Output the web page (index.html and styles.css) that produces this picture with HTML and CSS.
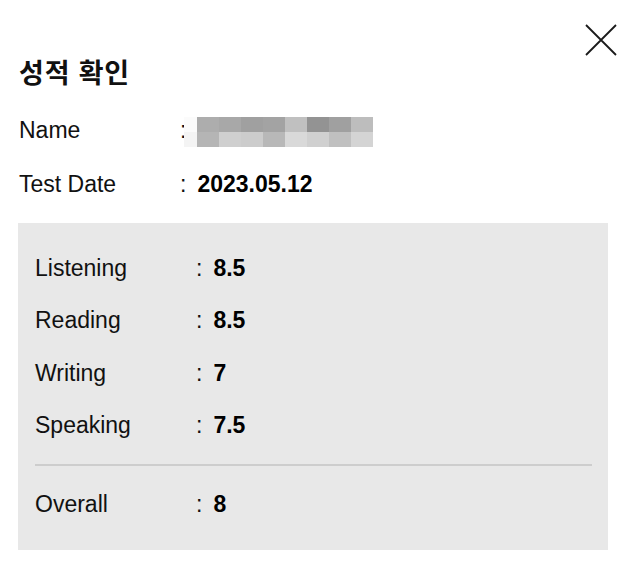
FILE: index.html
```html
<!DOCTYPE html>
<html lang="ko">
<head>
<meta charset="utf-8">
<title>성적 확인</title>
<link rel="stylesheet" href="styles.css">
</head>
<body>
<div class="sheet">
  <div class="topbar">
    <button class="close" aria-label="닫기">
      <svg width="32" height="32" viewBox="0 0 32 32"><path d="M1 1 L31 31 M31 1 L1 31" stroke="#1a1a1a" stroke-width="1.8" fill="none"/></svg>
    </button>
  </div>
  <h1 class="title">성적 확인</h1>
  <div class="info">
    <div class="row">
      <span class="label">Name</span>
      <span class="colon">:</span>
      <span class="blur" aria-label="hidden name">
        <i></i><i></i><i></i><i></i><i></i><i></i><i></i><i></i><i></i>
        <i></i><i></i><i></i><i></i><i></i><i></i><i></i><i></i><i></i>
      </span>
    </div>
    <div class="row">
      <span class="label">Test Date</span>
      <span class="colon">:</span>
      <span class="value">2023.05.12</span>
    </div>
  </div>
  <div class="scores">
    <div class="row srow">
      <span class="label">Listening</span>
      <span class="colon">:</span>
      <span class="value">8.5</span>
    </div>
    <div class="row srow">
      <span class="label">Reading</span>
      <span class="colon">:</span>
      <span class="value">8.5</span>
    </div>
    <div class="row srow">
      <span class="label">Writing</span>
      <span class="colon">:</span>
      <span class="value">7</span>
    </div>
    <div class="row srow">
      <span class="label">Speaking</span>
      <span class="colon">:</span>
      <span class="value">7.5</span>
    </div>
    <div class="divider"></div>
    <div class="row srow">
      <span class="label">Overall</span>
      <span class="colon">:</span>
      <span class="value">8</span>
    </div>
  </div>
</div>
</body>
</html>
```

FILE: styles.css
```css
* { box-sizing: border-box; }
html, body { margin: 0; padding: 0; background: #fff; }
body {
  font-family: "Liberation Sans", Arial, sans-serif;
  color: #111;
  width: 629px;
  height: 568px;
  overflow: hidden;
}
.sheet {
  padding: 24px 0 0 0;
}
.topbar {
  display: flex;
  justify-content: flex-end;
  height: 32px;
  padding-right: 12px;
}
.close {
  border: 0;
  background: none;
  padding: 0;
  margin: 0;
  width: 32px;
  height: 32px;
  display: block;
  cursor: pointer;
}
.close svg { display: block; }
.title {
  margin: 1px 0 0 19px;
  font-family: "Noto Sans CJK KR", sans-serif;
  font-weight: 700;
  font-size: 27px;
  line-height: 30px;
  color: #111;
  letter-spacing: 0.8px;
}
.info {
  margin: 16px 0 0 19px;
}
.row {
  display: grid;
  grid-template-columns: 150px auto 1fr;
  column-gap: 11px;
  align-items: center;
  height: 54px;
  font-size: 23px;
}
.label { color: #111; }
.colon { color: #111; }
.value { font-weight: 700; color: #000; }
.blur {
  display: grid;
  grid-template-columns: 13px repeat(8, 22px);
  grid-template-rows: 15px 15px;
  width: 189px;
  margin-left: -13px;
  margin-top: 4px;
}
.blur i { display: block; }
.blur i:nth-child(1) { background: #fbfbfb; }
.blur i:nth-child(2) { background: #adadad; }
.blur i:nth-child(3) { background: #a8a8a8; }
.blur i:nth-child(4) { background: #a0a0a0; }
.blur i:nth-child(5) { background: #a3a3a3; }
.blur i:nth-child(6) { background: #c0c0c0; }
.blur i:nth-child(7) { background: #939393; }
.blur i:nth-child(8) { background: #a0a0a0; }
.blur i:nth-child(9) { background: #bdbdbd; }
.blur i:nth-child(10) { background: #f4f4f4; }
.blur i:nth-child(11) { background: #b5b5b5; }
.blur i:nth-child(12) { background: #cfcfcf; }
.blur i:nth-child(13) { background: #cccccc; }
.blur i:nth-child(14) { background: #b8b8b8; }
.blur i:nth-child(15) { background: #d9d9d9; }
.blur i:nth-child(16) { background: #d0d0d0; }
.blur i:nth-child(17) { background: #c0c0c0; }
.blur i:nth-child(18) { background: #d4d4d4; }
.scores {
  margin: 12px 21px 0 18px;
  background: #e8e8e8;
  padding: 19px 16px 19px 17px;
}
.srow { height: 52.5px; }
.divider {
  height: 2px;
  background: #cdcdcd;
  margin: 11.5px 0 13px;
}
```
